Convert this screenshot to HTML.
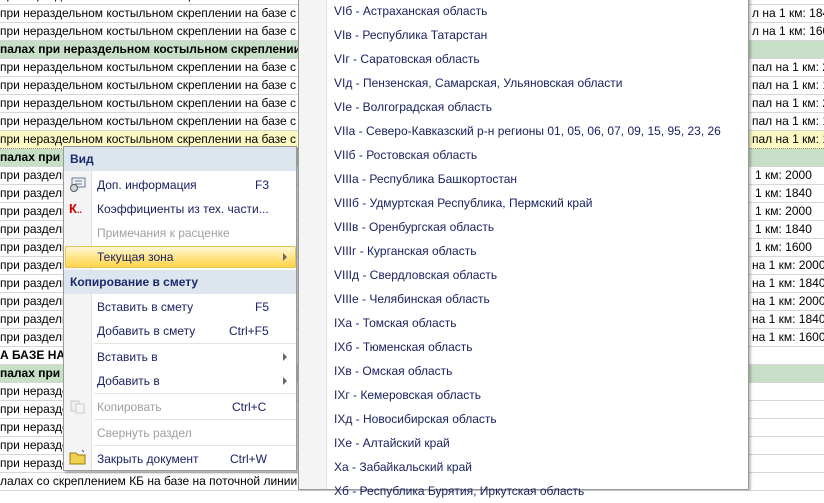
<!DOCTYPE html>
<html><head><meta charset="utf-8"><style>
*{margin:0;padding:0;box-sizing:border-box}
body{width:824px;height:488px;overflow:hidden;background:#fff;position:relative;font-family:"Liberation Sans","DejaVu Sans",sans-serif;font-size:12px}
.row{position:absolute;left:0;width:824px;height:18px;border-bottom:1px solid #d6d6d6;line-height:17px;white-space:nowrap;overflow:hidden;color:#000}
.g{background:#c6dfc6;font-weight:bold}
.y{background:#fbf8c4;border-bottom:1px dotted #888}
.r{position:absolute;left:752px;top:0}
.menu{position:absolute;left:63px;top:146px;width:234px;height:325px;background:#fff;border:1px solid #9a9a9a;box-shadow:2px 2px 2px rgba(0,0,0,.3)}
.gut{position:absolute;left:0;top:0;width:28px;height:100%;background:#f4f4f4;border-right:1px solid #e0e0e0}
.hd{position:absolute;left:0;width:232px;height:24px;background:#dde5ef;color:#1b2a6b;font-weight:bold;line-height:24px;padding-left:6px;font-size:12px}
.it{position:absolute;left:33px;color:#1b2260;line-height:24px;height:24px}
.dis{color:#a0a0a0}
.sc{position:absolute;color:#1b2260;line-height:24px}
.sep{position:absolute;left:30px;width:202px;height:1px;background:#e2e2e2}
.arr{position:absolute;left:219px;width:0;height:0;border-top:4px solid transparent;border-bottom:4px solid transparent;border-left:4px solid #666}
.sub{position:absolute;left:298px;top:-2px;width:451px;height:492px;background:#fff;border:1px solid #9a9a9a;box-shadow:2px 0 2px rgba(0,0,0,.25)}
.sub .gut{width:28px}
.si{position:absolute;left:35px;color:#1b2260;line-height:24px;white-space:nowrap}
</style></head><body>

<div class="row" style="top:-13px">при нераздельном костыльном скреплении на базе с приме<span class="r">л на 1 км: 1840</span></div>
<div class="row" style="top:5px">при нераздельном костыльном скреплении на базе с приме<span class="r">л на 1 км: 1840</span></div>
<div class="row" style="top:23px">при нераздельном костыльном скреплении на базе с приме<span class="r">л на 1 км: 1600</span></div>
<div class="row g" style="top:41px">палах при нераздельном костыльном скреплении</div>
<div class="row" style="top:59px">при нераздельном костыльном скреплении на базе с приме<span class="r">пал на 1 км: 2000</span></div>
<div class="row" style="top:77px">при нераздельном костыльном скреплении на базе с приме<span class="r">пал на 1 км: 1840</span></div>
<div class="row" style="top:95px">при нераздельном костыльном скреплении на базе с приме<span class="r">пал на 1 км: 2000</span></div>
<div class="row" style="top:113px">при нераздельном костыльном скреплении на базе с приме<span class="r">пал на 1 км: 1840</span></div>
<div class="row y" style="top:131px">при нераздельном костыльном скреплении на базе с приме<span class="r">пал на 1 км: 1600</span></div>
<div class="row g" style="top:149px">палах при</div>
<div class="row" style="top:167px">при раздельном<span class="r" style="left:755px">1 км: 2000</span></div>
<div class="row" style="top:185px">при раздельном<span class="r" style="left:755px">1 км: 1840</span></div>
<div class="row" style="top:203px">при раздельном<span class="r" style="left:755px">1 км: 2000</span></div>
<div class="row" style="top:221px">при раздельном<span class="r" style="left:755px">1 км: 1840</span></div>
<div class="row" style="top:239px">при раздельном<span class="r" style="left:755px">1 км: 1600</span></div>
<div class="row" style="top:257px">при раздельном<span class="r">на 1 км: 2000</span></div>
<div class="row" style="top:275px">при раздельном<span class="r">на 1 км: 1840</span></div>
<div class="row" style="top:293px">при раздельном<span class="r">на 1 км: 2000</span></div>
<div class="row" style="top:311px">при раздельном<span class="r">на 1 км: 1840</span></div>
<div class="row" style="top:329px">при раздельном<span class="r">на 1 км: 1600</span></div>
<div class="row" style="top:347px;font-weight:bold">А БАЗЕ НА ПОТОЧНОЙ</div>
<div class="row g" style="top:365px">палах при</div>
<div class="row" style="top:383px">при нераздельном</div>
<div class="row" style="top:401px">при нераздельном</div>
<div class="row" style="top:419px">при нераздельном</div>
<div class="row" style="top:437px">при нераздельном</div>
<div class="row" style="top:455px">при нераздельном</div>
<div class="row" style="top:473px">лалах со скреплением КБ на базе на поточной линии тип рельс</div>

<div class="menu">
<div class="gut"></div>
<div class="hd" style="top:0">Вид</div>
<svg style="position:absolute;left:5px;top:30px" width="18" height="16"><rect x="3" y="1" width="13" height="9" fill="#eef2f8" stroke="#6a7a90"/><line x1="6" y1="4" x2="13" y2="4" stroke="#6a7a90"/><line x1="6" y1="7" x2="13" y2="7" stroke="#6a7a90"/><circle cx="5" cy="11" r="3.5" fill="#cfd8e0" stroke="#555"/></svg>
<div class="it" style="top:26px">Доп. информация</div><div class="sc" style="left:191px;top:26px">F3</div>
<div style="position:absolute;left:5px;top:50px;color:#d00000;font-weight:bold;line-height:24px;font-size:13px">К<span style="font-size:9px">..</span></div>
<div class="it" style="top:50px">Коэффициенты из тех. части...</div>
<div class="it dis" style="top:74px">Примечания к расценке</div>
<div style="position:absolute;left:1px;top:99px;width:231px;height:22px;border:1px solid #e8c450;border-radius:2px;background:linear-gradient(#fff8d8,#ffe58a 50%,#ffd44a)"></div>
<div class="it" style="top:98px">Текущая зона</div><div class="arr" style="top:106px"></div>
<div class="hd" style="top:123px">Копирование в смету</div>
<div class="it" style="top:148px">Вставить в смету</div><div class="sc" style="left:191px;top:148px">F5</div>
<div class="it" style="top:172px">Добавить в смету</div><div class="sc" style="left:165px;top:172px">Ctrl+F5</div>
<div class="sep" style="top:196px"></div>
<div class="it" style="top:198px">Вставить в</div><div class="arr" style="top:206px"></div>
<div class="it" style="top:222px">Добавить в</div><div class="arr" style="top:230px"></div>
<div class="sep" style="top:246px"></div>
<svg style="position:absolute;left:6px;top:253px" width="16" height="14"><rect x="1" y="1" width="8" height="10" fill="#eee" stroke="#ccc"/><rect x="6" y="4" width="8" height="9" fill="#f4f4f4" stroke="#ccc"/></svg>
<div class="it dis" style="top:248px">Копировать</div><div class="sc dis" style="left:168px;top:248px">Ctrl+C</div>
<div class="sep" style="top:272px"></div>
<div class="it dis" style="top:274px">Свернуть раздел</div>
<div class="sep" style="top:298px"></div>
<svg style="position:absolute;left:5px;top:302px" width="18" height="16"><path d="M1 4h6l2 2h7v9H1z" fill="#f0d050" stroke="#9a7a10"/><path d="M13 1l2 2" stroke="#555"/></svg>
<div class="it" style="top:300px">Закрыть документ</div><div class="sc" style="left:166px;top:300px">Ctrl+W</div>
</div>

<div class="sub">
<div class="gut"></div>
<div class="si" style="top:0px">VIб - Астраханская область</div>
<div class="si" style="top:24px">VIв - Республика Татарстан</div>
<div class="si" style="top:48px">VIг - Саратовская область</div>
<div class="si" style="top:72px">VIд - Пензенская, Самарская, Ульяновская области</div>
<div class="si" style="top:96px">VIе - Волгоградская область</div>
<div class="si" style="top:120px">VIIа - Северо-Кавказский р-н регионы 01, 05, 06, 07, 09, 15, 95, 23, 26</div>
<div class="si" style="top:144px">VIIб - Ростовская область</div>
<div class="si" style="top:168px">VIIIа - Республика Башкортостан</div>
<div class="si" style="top:192px">VIIIб - Удмуртская Республика, Пермский край</div>
<div class="si" style="top:216px">VIIIв - Оренбургская область</div>
<div class="si" style="top:240px">VIIIг - Курганская область</div>
<div class="si" style="top:264px">VIIIд - Свердловская область</div>
<div class="si" style="top:288px">VIIIе - Челябинская область</div>
<div class="si" style="top:312px">IXа - Томская область</div>
<div class="si" style="top:336px">IXб - Тюменская область</div>
<div class="si" style="top:360px">IXв - Омская область</div>
<div class="si" style="top:384px">IXг - Кемеровская область</div>
<div class="si" style="top:408px">IXд - Новосибирская область</div>
<div class="si" style="top:432px">IXе - Алтайский край</div>
<div class="si" style="top:456px">Xа - Забайкальский край</div>
<div class="si" style="top:480px">Xб - Республика Бурятия, Иркутская область</div>
</div>
</body></html>
